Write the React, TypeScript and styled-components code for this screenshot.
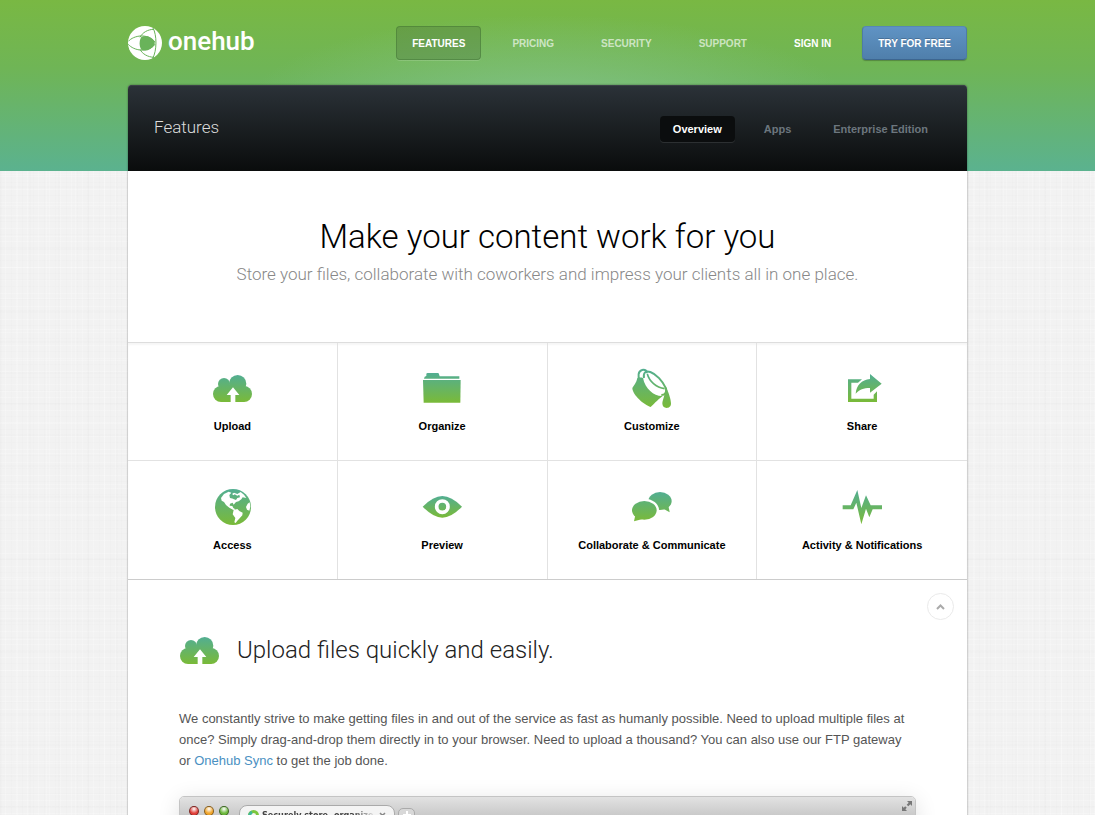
import React from "react";
import styled, { createGlobalStyle, css } from "styled-components";

const GlobalStyle = createGlobalStyle`
  *, *::before, *::after { box-sizing: border-box; }
  html, body { margin: 0; padding: 0; height: 100%; }
  #root { height: 100%; }
  body {
    font-family: "Liberation Sans", Arial, Helvetica, sans-serif;
    color: #555;
    background: #f2f2f2;
  }
  h1, h2, p, ul { margin: 0; padding: 0; }
  ul { list-style: none; }
  a { text-decoration: none; }
`;

const headingFont = css`
  font-family: Roboto, "Open Sans", sans-serif;
  font-weight: 300;
`;

const Page = styled.div`
  height: 100%;
  overflow: hidden auto;
  background:
    radial-gradient(ellipse 300px 90px at 50% 105px, rgba(140, 200, 150, 0.65), rgba(140, 200, 150, 0)) top / 100% 171px no-repeat,
    linear-gradient(#79b843, #6fb556 40%, #5bb28f) top / 100% 171px no-repeat,
    repeating-linear-gradient(90deg, rgba(0, 0, 0, 0.008) 0 1px, transparent 1px 5px, rgba(255, 255, 255, 0.2) 5px 6px, transparent 6px 11px),
    repeating-linear-gradient(90deg, rgba(0, 0, 0, 0.008) 0 2px, transparent 2px 17px, rgba(255, 255, 255, 0.2) 17px 18px, transparent 18px 29px),
    repeating-linear-gradient(rgba(0, 0, 0, 0.008) 0 1px, transparent 1px 7px, rgba(255, 255, 255, 0.2) 7px 8px, transparent 8px 13px),
    repeating-linear-gradient(rgba(0, 0, 0, 0.008) 0 2px, transparent 2px 19px, rgba(255, 255, 255, 0.2) 19px 20px, transparent 20px 31px),
    #f2f2f2;
`;

const Container = styled.div`
  width: 100%;
  max-width: 839px;
  margin: 0 auto;
`;

const Header = styled.header`
  display: flex;
  align-items: center;
  justify-content: space-between;
  height: 85px;
`;

const Logo = styled.a`
  display: flex;
  align-items: center;
  gap: 6px;
  color: #fff;
  font: 500 26px/34px Roboto, sans-serif;
`;

const LogoText = styled.span`
  padding-bottom: 4px;
`;

const MainNav = styled.nav`
  display: flex;
  gap: 15px;
`;

const NavLink = styled.a<{ $tone?: "active" | "strong" | "cta" }>`
  padding: 2px 15px 0;
  border: 1px solid transparent;
  border-radius: 4px;
  font-size: 10px;
  font-weight: 700;
  line-height: 30px;
  text-transform: uppercase;
  color: rgba(255, 255, 255, 0.65);
  ${(p) => p.$tone === "strong" && css`color: #fff;`}
  ${(p) => p.$tone === "active" && css`
    color: #fff;
    background: rgba(70, 110, 60, 0.32);
    border-color: rgba(50, 100, 40, 0.35);
    box-shadow: 0 1px 0 rgba(255, 255, 255, 0.15);
  `}
  ${(p) => p.$tone === "cta" && css`
    color: #fff;
    background: linear-gradient(#5f93c4, #4f7fab);
    border-color: #5688b6 #4d7ba6 #3d6690;
    box-shadow: 0 1px 1px rgba(0, 0, 0, 0.25);
    text-shadow: 0 -1px 0 rgba(0, 0, 0, 0.2);
  `}
`;

const Panel = styled.main`
  background: #fff;
  border-radius: 4px 4px 0 0;
  box-shadow: 0 0 2px rgba(0, 0, 0, 0.5);
`;

const TitleBar = styled.div`
  display: flex;
  align-items: center;
  justify-content: space-between;
  height: 86px;
  padding: 2px 26px 0;
  border-radius: 4px 4px 0 0;
  background: linear-gradient(#2b3238, #0a0c0c);
  box-shadow: inset 0 1px 0 #3b4247;
`;

const BarTitle = styled.span`
  ${headingFont}
  padding-bottom: 4px;
  font-size: 17px;
  color: #ddd;
`;

const SubNav = styled.nav`
  display: flex;
  gap: 16px;
`;

const SubLink = styled.a<{ $active?: boolean }>`
  padding: 0 13px;
  border-radius: 4px;
  font-size: 11px;
  font-weight: 700;
  line-height: 26px;
  color: ${(p) => (p.$active ? "#fff" : "#6c767e")};
  ${(p) => p.$active && css`
    background: #0b0d0e;
    box-shadow: 0 1px 0 rgba(255, 255, 255, 0.1);
  `}
`;

const Hero = styled.section`
  height: 171px;
  padding-top: 41px;
  text-align: center;
`;

const HeroTitle = styled.h1`
  ${headingFont}
  font-size: 33px;
  line-height: 50px;
  color: #000;
`;

const HeroText = styled.p`
  font: 300 17px/24px Roboto, sans-serif;
  color: #888;
`;

const FeatureGrid = styled.ul`
  display: grid;
  grid-template-columns: repeat(4, 1fr);
  grid-auto-rows: 118px;
  border-top: 1px solid #ddd;
  border-bottom: 1px solid #ccc;
  box-shadow: inset 0 2px 2px rgba(0, 0, 0, 0.04);
`;

const Feature = styled.li`
  border-right: 1px solid #e2e2e2;
  padding-top: 26px;
  &:nth-child(4n) { border-right: 0; }
  &:nth-child(-n + 4) {
    padding-top: 25px;
    border-bottom: 1px solid #e2e2e2;
  }
`;

const FeatureLink = styled.a`
  display: flex;
  flex-direction: column;
  align-items: center;
  gap: 10px;
  font-size: 11px;
  font-weight: 700;
  line-height: 16px;
  color: #000;
`;

const Article = styled.article`
  display: flex;
  flex-direction: column;
  padding: 13px 13px 40px;
`;

const TopLink = styled.a`
  display: flex;
  align-items: center;
  justify-content: center;
  align-self: flex-end;
  width: 27px;
  height: 27px;
  border: 1px solid #eaeaea;
  border-radius: 50%;
`;

const ArticleBody = styled.div`
  padding: 8px 38px 0;
`;

const ArticleHeading = styled.div`
  display: flex;
  align-items: center;
  gap: 18px;
`;

const ArticleTitle = styled.h2`
  ${headingFont}
  font-size: 24px;
  line-height: 44px;
  color: #222;
`;

const Copy = styled.p`
  margin: 36px 0 25px;
  font-size: 13px;
  line-height: 21px;
  color: #555;
`;

const TextLink = styled.a`
  color: #4a90c2;
`;

const BrowserWindow = styled.div`
  height: 360px;
  border: 1px solid #c4c4c4;
  border-radius: 5px;
  background: #fff;
  box-shadow: 0 4px 22px rgba(0, 0, 0, 0.12);
  overflow: hidden;
`;

const WindowBar = styled.div`
  display: flex;
  align-items: flex-start;
  height: 34px;
  padding: 0 2px 0 9px;
  background: linear-gradient(#e2e2e2, #b4b4b4);
`;

const Lights = styled.div`
  display: flex;
  gap: 5px;
  padding-top: 9px;
`;

const Light = styled.span<{ $color: string }>`
  width: 10px;
  height: 10px;
  border: 1px solid rgba(0, 0, 0, 0.45);
  border-radius: 50%;
  background: radial-gradient(circle at 50% 25%, #fff, ${(p) => p.$color} 60%);
`;

const BrowserTab = styled.div`
  display: flex;
  align-items: center;
  gap: 3px;
  width: 156px;
  height: 26px;
  margin: 8px 3px 0 10px;
  padding: 0 8px 6px;
  border: 1px solid #aaa;
  border-radius: 8px 8px 0 0;
  background: #f4f4f4;
  font: 700 9px/12px "DejaVu Sans Condensed", "DejaVu Sans", sans-serif;
  color: #444;
  white-space: nowrap;
`;

const TabTitle = styled.span`
  flex: 1;
  overflow: hidden;
  mask-image: linear-gradient(90deg, #000 80%, transparent);
`;

const NewTab = styled.span`
  display: flex;
  align-items: center;
  justify-content: center;
  width: 17px;
  height: 14px;
  margin-top: 11px;
  border: 1px solid #aaa;
  border-radius: 5px;
  background: #d8d8d8;
`;

const Expand = styled.span`
  margin: 3px 0 0 auto;
  line-height: 0;
`;

type GlyphName = "upload" | "organize" | "customize" | "share" | "access" | "preview" | "chat" | "activity";

const offsets: Record<GlyphName, string> = {
  upload: "-66 -54",
  organize: "-696 -54",
  customize: "-96 -54",
  share: "-726 -54",
  access: "-66 -51",
  preview: "-696 -51",
  chat: "-216 -51",
  activity: "-846 -51",
};

const spans: Record<GlyphName, [number, number]> = {
  upload: [75, 156],
  organize: [69, 158],
  customize: [56, 174],
  share: [72, 156],
  access: [57, 165],
  preview: [78, 143],
  chat: [66, 154],
  activity: [60, 163],
};

const shapes: Record<GlyphName, React.ReactNode> = {
  upload: (
    <>
      <circle cx="102" cy="102" r="18" />
      <circle cx="143" cy="101" r="26" />
      <circle cx="93" cy="132" r="24" />
      <circle cx="162" cy="132" r="24" />
      <path d="M93 105H150L163 120V156H93Z" />
      <path fill="#fff" d="M129 112L148 135H136V157H122V135H110Z" />
    </>
  ),
  organize: (
    <>
      <path d="M702 86L704 80L709 78V73Q709 69 713 69H743Q747 69 747 73L749 79H808V86Z" />
      <path d="M699 90H812L811 158H701Z" />
    </>
  ),
  customize: (
    <>
      <path fill="none" stroke="url(#g-customize)" strokeWidth="6" d="M120 90C112 80 115 63 126 60C135 57 142 63 140 70" />
      <path d="M112 84C110 98 100 108 97 114C98 136 132 164 152 171C160 164 170 152 188 138C164 140 136 118 129 84C125 80 118 84 112 84Z" />
      <path fill="none" stroke="url(#g-customize)" strokeWidth="6" d="M132 84C129 68 137 61 151 66C168 72 188 93 198 115C202 126 195 135 184 135" />
      <path fill="none" stroke="url(#g-customize)" strokeWidth="5" d="M142 72C148 94 168 112 194 116" />
      <path d="M196 108C206 126 213 148 213 160C213 170 207 174 200 174C192 174 187 169 187 160C188 148 196 136 196 108Z" />
    </>
  ),
  share: (
    <>
      <path d="M744 88H786L774 98H754V146H821V134L831 124V156H744Z" />
      <path d="M810 72L845 101L810 128V114C790 114 779 118 767 131C769 106 785 89 810 87Z" />
    </>
  ),
  access: (
    <>
      <circle cx="129" cy="111" r="54" />
      <path fill="#fff" d="M93 84L102 72L116 65L124 68L118 75L120 84L130 86L134 78L126 72L132 68L142 72L152 66L162 74L169 84L158 82L154 88L146 94L138 96L131 104L128 98L120 101L119 107L127 108L130 114L136 118L130 120L118 113L108 105L102 96L95 92ZM131 120L142 117L148 123L158 128L157 136L149 145L142 152L137 159L133 157L136 144L128 133ZM173 101L179 97L181 110L178 122L171 119L168 111Z" />
      <path d="M126 80L134 73L142 77L148 74L150 82L142 84L138 90L130 87Z" />
    </>
  ),
  preview: (
    <>
      <path d="M698 110Q730 78 757 78Q784 78 816 110Q784 143 757 143Q730 143 698 110Z" />
      <circle fill="none" stroke="#fff" strokeWidth="11" cx="757" cy="110" r="17" />
    </>
  ),
  chat: (
    <>
      <ellipse cx="300" cy="93" rx="35" ry="27" />
      <path d="M306 114L329 127L325 106Z" />
      <ellipse fill="#fff" cx="253" cy="121" rx="44" ry="35" />
      <ellipse cx="253" cy="121" rx="37" ry="28" />
      <path d="M226 136L222 154L248 147Z" />
    </>
  ),
  activity: (
    <path d="M848 106H872L892 60L904 114L918 76L932 106H966V118H938L928 142L918 116L904 163L889 98L880 118H848Z" />
  ),
};

const Glyph = ({ name, id = name }: { name: GlyphName; id?: string }) => {
  const [top, bottom] = spans[name];
  return (
    <svg width="40" height="40" viewBox="0 0 120 120" aria-hidden="true">
      <defs>
        <linearGradient id={`g-${id}`} gradientUnits="userSpaceOnUse" x1="0" x2="0" y1={top} y2={bottom}>
          <stop offset="0" stopColor="#52ae92" />
          <stop offset="1" stopColor="#7aba38" />
        </linearGradient>
      </defs>
      <g transform={`translate(${offsets[name]})`} fill={`url(#g-${id})`}>
        {shapes[name]}
      </g>
    </svg>
  );
};

const LogoMark = () => (
  <svg width="34" height="34" viewBox="53 78 102 102" aria-hidden="true">
    <circle cx="104" cy="129" r="51" fill="#fff" />
    <g fill="none" stroke="#69b35a" strokeWidth="3">
      <path d="M54 124C70 106 112 98 134 127" />
      <path d="M54 133C70 152 112 160 134 133" />
      <path d="M89 112C96 98 112 88 131 88" />
      <path d="M89 148C96 162 112 171 131 172" />
      <path d="M128 84C140 105 140 152 127 175" />
    </g>
    <path fill="#69b35a" d="M93 111C108 104 122 110 133 124V134C122 149 108 155 93 149C86 138 86 122 93 111Z" />
  </svg>
);

const features: { name: GlyphName; label: string }[] = [
  { name: "upload", label: "Upload" },
  { name: "organize", label: "Organize" },
  { name: "customize", label: "Customize" },
  { name: "share", label: "Share" },
  { name: "access", label: "Access" },
  { name: "preview", label: "Preview" },
  { name: "chat", label: "Collaborate & Communicate" },
  { name: "activity", label: "Activity & Notifications" },
];

export default function App() {
  return (
    <Page>
      <GlobalStyle />
      <Container>
        <Header>
          <Logo href="#">
            <LogoMark />
            <LogoText>onehub</LogoText>
          </Logo>
          <MainNav>
            <NavLink href="#" $tone="active">Features</NavLink>
            <NavLink href="#">Pricing</NavLink>
            <NavLink href="#">Security</NavLink>
            <NavLink href="#">Support</NavLink>
            <NavLink href="#" $tone="strong">Sign in</NavLink>
            <NavLink href="#" $tone="cta">Try for free</NavLink>
          </MainNav>
        </Header>
        <Panel>
          <TitleBar>
            <BarTitle>Features</BarTitle>
            <SubNav>
              <SubLink href="#" $active>Overview</SubLink>
              <SubLink href="#">Apps</SubLink>
              <SubLink href="#">Enterprise Edition</SubLink>
            </SubNav>
          </TitleBar>
          <Hero>
            <HeroTitle>Make your content work for you</HeroTitle>
            <HeroText>Store your files, collaborate with coworkers and impress your clients all in one place.</HeroText>
          </Hero>
          <FeatureGrid>
            {features.map((f) => (
              <Feature key={f.name}>
                <FeatureLink href={`#${f.name}`}>
                  <Glyph name={f.name} />
                  {f.label}
                </FeatureLink>
              </Feature>
            ))}
          </FeatureGrid>
          <Article>
            <TopLink href="#" aria-label="Back to top">
              <svg width="9" height="6" viewBox="0 0 9 6" aria-hidden="true">
                <path d="M1 5L4.500 1.500L8 5" fill="none" stroke="#aaa" strokeWidth="2" />
              </svg>
            </TopLink>
            <ArticleBody>
              <ArticleHeading>
                <Glyph name="upload" id="upload-large" />
                <ArticleTitle>Upload files quickly and easily.</ArticleTitle>
              </ArticleHeading>
              <Copy>
                We constantly strive to make getting files in and out of the service as fast as humanly possible. Need to upload multiple files at once? Simply drag-and-drop them directly in to your browser. Need to upload a thousand? You can also use our FTP gateway or <TextLink href="#">Onehub Sync</TextLink> to get the job done.
              </Copy>
              <BrowserWindow>
                <WindowBar>
                  <Lights>
                    <Light $color="#e0403a" />
                    <Light $color="#f0a52c" />
                    <Light $color="#6cb83c" />
                  </Lights>
                  <BrowserTab>
                    <svg width="11" height="11" viewBox="0 0 11 11" aria-hidden="true">
                      <circle cx="5.500" cy="5.500" r="4" fill="none" stroke="#7cc63c" strokeWidth="3" />
                      <path d="M2 7A4 4 0 0 1 4 2" fill="none" stroke="#3fb79a" strokeWidth="3" />
                    </svg>
                    <TabTitle>Securely store, organize, and</TabTitle>
                    <svg width="7" height="7" viewBox="0 0 7 7" aria-hidden="true">
                      <path d="M1 1L6 6M6 1L1 6" stroke="#888" strokeWidth="1.500" />
                    </svg>
                  </BrowserTab>
                  <NewTab>
                    <svg width="8" height="8" viewBox="0 0 8 8" aria-hidden="true">
                      <path d="M4 0V8M0 4H8" stroke="#fff" strokeWidth="2" />
                    </svg>
                  </NewTab>
                  <Expand>
                    <svg width="12" height="12" viewBox="0 0 12 12" aria-hidden="true">
                      <path d="M6 1H11V6L9.300 4.300L7.300 6.300L5.700 4.700L7.700 2.700ZM1 6L2.700 7.700L4.200 6.200L5.800 7.800L4.300 9.300L6 11H1Z" fill="#777" />
                    </svg>
                  </Expand>
                </WindowBar>
              </BrowserWindow>
            </ArticleBody>
          </Article>
        </Panel>
      </Container>
    </Page>
  );
}
